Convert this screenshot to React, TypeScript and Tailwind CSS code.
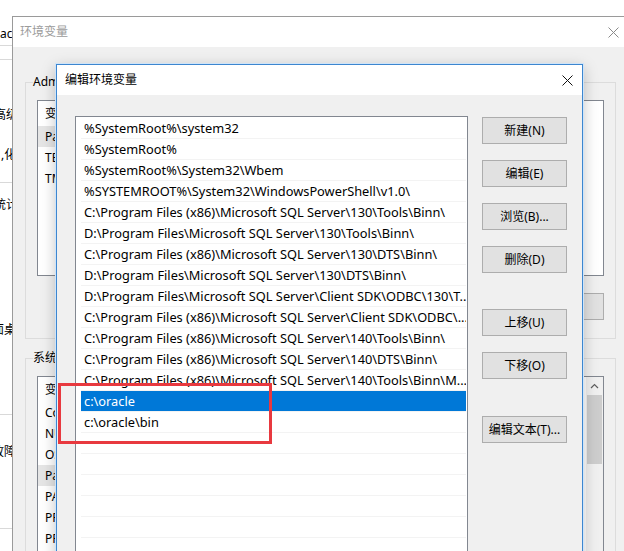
import React from 'react'

const paths = [
  '%SystemRoot%\\system32',
  '%SystemRoot%',
  '%SystemRoot%\\System32\\Wbem',
  '%SYSTEMROOT%\\System32\\WindowsPowerShell\\v1.0\\',
  'C:\\Program Files (x86)\\Microsoft SQL Server\\130\\Tools\\Binn\\',
  'D:\\Program Files\\Microsoft SQL Server\\130\\Tools\\Binn\\',
  'C:\\Program Files (x86)\\Microsoft SQL Server\\130\\DTS\\Binn\\',
  'D:\\Program Files\\Microsoft SQL Server\\130\\DTS\\Binn\\',
  'D:\\Program Files\\Microsoft SQL Server\\Client SDK\\ODBC\\130\\T...',
  'C:\\Program Files (x86)\\Microsoft SQL Server\\Client SDK\\ODBC\\...',
  'C:\\Program Files (x86)\\Microsoft SQL Server\\140\\Tools\\Binn\\',
  'C:\\Program Files (x86)\\Microsoft SQL Server\\140\\DTS\\Binn\\',
  'C:\\Program Files (x86)\\Microsoft SQL Server\\140\\Tools\\Binn\\M...',
  'c:\\oracle',
  'c:\\oracle\\bin',
]

const userVars = ['Path', 'TEMP', 'TMP']
const sysVars = ['ComSpec', 'NUMBER_OF_PROCESSORS', 'OS', 'Path', 'PATHEXT', 'PROCESSOR_ARCHITECTURE', 'PROCESSOR_IDENTIFIER']

function CloseIcon({ color }: { color: string }) {
  return (
    <svg width="11" height="11" viewBox="0 0 11 11">
      <path d="M0.5 0.5 L10.5 10.5 M10.5 0.5 L0.5 10.5" stroke={color} strokeWidth="1" fill="none" />
    </svg>
  )
}

function Btn({ label }: { label: string }) {
  return (
    <button className="h-[27px] w-[85px] border border-[#adadad] bg-[#e1e1e1] text-[12px] text-black flex items-center justify-center">
      {label}
    </button>
  )
}

function VarList({ rows, selected }: { rows: string[]; selected: string }) {
  return (
    <>
      <div className="h-[25px] flex items-center bg-white">
        <span className="w-[150px] pl-[7px]">变量</span>
        <span>值</span>
      </div>
      {rows.map((r, i) => (
        <div key={i} className="h-[21px] flex items-stretch">
          <span className={`w-[150px] pl-[7px] flex items-center ${r === selected ? 'bg-[#e5e5e5]' : ''}`}>{r}</span>
          <span className="flex items-center">...</span>
        </div>
      ))}
    </>
  )
}

export default function App() {
  return (
    <div className="relative w-[624px] h-[551px] overflow-hidden bg-white text-[12px] text-black font-[family-name:'Noto_Sans','Noto_Sans_CJK_SC',sans-serif]">
      {/* window behind: system properties */}
      <div className="absolute left-0 top-0 w-[200px] h-full bg-white flex flex-col text-[12px] leading-[16px]">
        <div className="mt-[22px] h-[24px] border-b border-[#d9d9d9] flex items-center">ac</div>
        <div className="mt-[13px] border-b border-[#d9d9d9]" />
        <div className="mt-[47px] ml-[-6px]">高级</div>
        <div className="mt-[24px] ml-[1px]">,化</div>
        <div className="mt-[19px] border-b border-[#d9d9d9]" />
        <div className="mt-[14px] ml-[-6px]">统计</div>
        <div className="mt-[109px] ml-[-8px]">面桌</div>
        <div className="mt-[76px] border-b border-[#d9d9d9]" />
        <div className="mt-[29px] ml-[-8px]">故障</div>
        <div className="mt-[68px] border-b border-[#d9d9d9]" />
      </div>

      {/* 环境变量 */}
      <div className="absolute left-[12px] top-[16px] w-[620px] h-[545px] border border-[#9a9a9a] bg-[#f0f0f0] flex flex-col">
        <div className="h-[30px] bg-white flex items-center justify-between shrink-0">
          <span className="pl-[7px] text-[#9b9b9b]">环境变量</span>
          <span className="w-[36px] flex justify-center">
            <CloseIcon color="#8a8a8a" />
          </span>
        </div>
        <div className="pl-[12px] pt-[27px] flex flex-col">
          <fieldset className="w-[584px] border border-[#dcdcdc] px-[11px] pb-[18px]">
            <legend className="ml-[-4px] leading-[16px] px-0">Administrator 的用户变量(U)</legend>
            <div className="mt-[10px] w-[567px] h-[176px] bg-white border border-[#828790] flex flex-col">
              <VarList rows={userVars} selected="Path" />
            </div>
            <div className="mt-[17px] w-[567px] flex justify-end gap-[8px]">
              <button className="h-[27px] w-[75px] border border-[#adadad] bg-[#e1e1e1]">新建(N)...</button>
              <button className="h-[27px] w-[75px] border border-[#adadad] bg-[#e1e1e1]">编辑(E)...</button>
              <button className="h-[27px] w-[90px] border border-[#adadad] bg-[#e1e1e1]">删除(D)</button>
            </div>
          </fieldset>
          <fieldset className="mt-[11px] w-[584px] border border-[#dcdcdc] px-[11px] pb-[18px]">
            <legend className="ml-[-4px] leading-[16px] px-0">系统变量(S)</legend>
            <div className="mt-[10px] w-[567px] h-[200px] bg-white border border-[#828790] flex">
              <div className="flex-1 flex flex-col">
                <VarList rows={sysVars} selected="Path" />
              </div>
              <div className="w-[17px] bg-[#f0f0f0] flex flex-col items-center">
                <div className="h-[17px] flex items-center justify-center">
                  <svg width="9" height="6" viewBox="0 0 9 6">
                    <path d="M1 5 L4.5 1.5 L8 5" stroke="#606060" strokeWidth="1.2" fill="none" />
                  </svg>
                </div>
                <div className="mt-[1px] w-[15px] h-[69px] bg-[#cdcdcd]" />
                <div className="flex-1" />
                <div className="h-[17px] flex items-center justify-center">
                  <svg width="9" height="6" viewBox="0 0 9 6">
                    <path d="M1 1 L4.5 4.5 L8 1" stroke="#606060" strokeWidth="1.2" fill="none" />
                  </svg>
                </div>
              </div>
            </div>
          </fieldset>
        </div>
      </div>

      {/* 编辑环境变量 */}
      <div className="absolute left-[56px] top-[64px] w-[527px] h-[500px] border border-[#3d86cf] bg-[#f0f0f0] shadow-[0_0_0_1px_#cfe4f8,0_4px_14px_rgba(0,0,0,0.25)] flex flex-col">
        <div className="h-[30px] bg-white flex items-center justify-between shrink-0">
          <span className="pl-[8px]">编辑环境变量</span>
          <span className="w-[30px] flex justify-center">
            <CloseIcon color="#111111" />
          </span>
        </div>
        <div className="flex pt-[21px] pl-[18px] gap-[14px]">
          <div className="w-[393px] h-[440px] bg-white border border-[#828790] pl-[5px] pr-[1px] pt-[1px] flex flex-col overflow-hidden text-[12.8px]">
            {paths.map((p, i) => (
              <div
                key={i}
                className={`h-[21px] shrink-0 flex items-center pl-[3px] pt-[2px] border-b border-[#f3f3f3] whitespace-nowrap overflow-hidden ${
                  i === 13 ? 'bg-[#0078d7] text-white' : ''
                }`}
              >
                {p}
              </div>
            ))}
            {Array.from({ length: 8 }).map((_, i) => (
              <div key={'e' + i} className="h-[21px] shrink-0 border-b border-[#f3f3f3]" />
            ))}
          </div>
          <div className="flex flex-col pt-[1px]">
            <div className="flex flex-col gap-[16px]">
              <Btn label="新建(N)" />
              <Btn label="编辑(E)" />
              <Btn label="浏览(B)..." />
              <Btn label="删除(D)" />
            </div>
            <div className="mt-[36px] flex flex-col gap-[16px]">
              <Btn label="上移(U)" />
              <Btn label="下移(O)" />
            </div>
            <div className="mt-[37px]">
              <Btn label="编辑文本(T)..." />
            </div>
          </div>
        </div>
      </div>

      {/* annotation */}
      <div className="absolute left-[58px] top-[383px] w-[214px] h-[61px] border-[3px] border-[#e8393f]" />
    </div>
  )
}
